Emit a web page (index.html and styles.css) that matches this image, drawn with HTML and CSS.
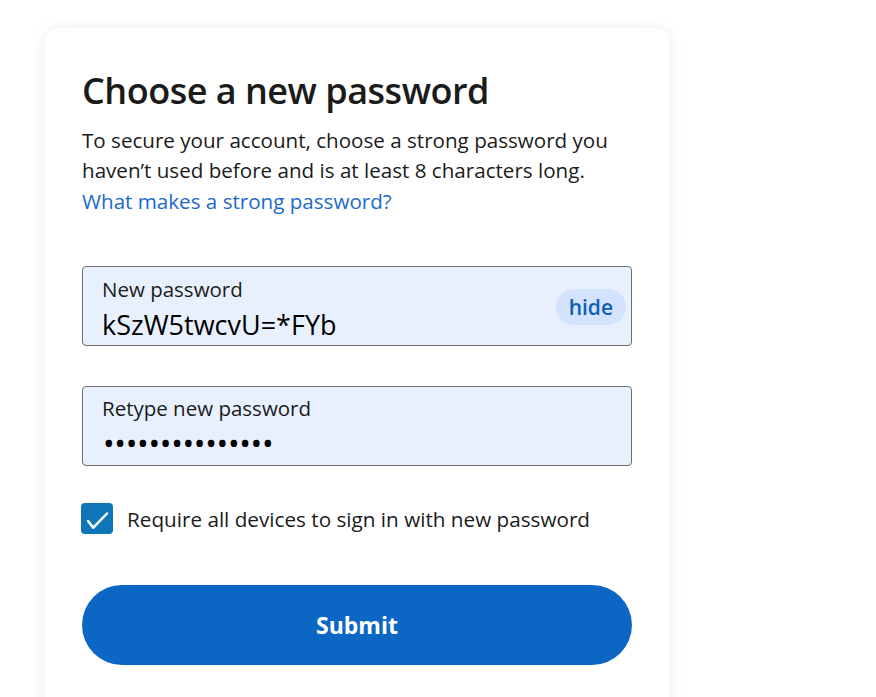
FILE: index.html
```html
<!DOCTYPE html>
<html lang="en">
<head>
<meta charset="utf-8">
<title>Choose a new password</title>
<link rel="stylesheet" href="styles.css">
</head>
<body>
<main class="card">
  <h1 class="title">Choose a new password</h1>
  <p class="intro">To secure your account, choose a strong password you haven’t used before and is at least 8 characters long.<br><a class="link" href="#">What makes a strong password?</a></p>

  <div class="field">
    <div class="field-text">
      <span class="label">New password</span>
      <span class="value">kSzW5twcvU=*FYb</span>
    </div>
    <span class="hide">hide</span>
  </div>

  <div class="field field-second">
    <div class="field-text">
      <span class="label">Retype new password</span>
      <span class="value dots">•••••••••••••••</span>
    </div>
  </div>

  <label class="check-row">
    <span class="checkbox">
      <svg width="32" height="31" viewBox="0 0 32 31"><path d="M7 18 L12.3 24.7 L26 10.5" fill="none" stroke="#fff" stroke-width="2.5" stroke-linecap="round" stroke-linejoin="round"/></svg>
    </span>
    <span class="check-label">Require all devices to sign in with new password</span>
  </label>

  <button class="submit" type="button">Submit</button>
</main>
</body>
</html>
```

FILE: styles.css
```css
* { box-sizing: border-box; }
html, body { margin: 0; padding: 0; background: #fff; }
body {
  font-family: "Open Sans", "Noto Sans", sans-serif;
  color: #1b1b1b;
  padding: 28px 0 0 45px;
}
.card {
  width: 624px;
  height: 700px;
  background: #fff;
  border-radius: 14px;
  box-shadow: 0 2px 18px rgba(0,0,0,0.08);
  padding: 41px 37px 0 37px;
}
.title {
  margin: 0;
  font-size: 36px;
  font-weight: 600;
  line-height: 44px;
  letter-spacing: -0.5px;
  color: #1b1b1b;
}
.intro {
  margin: 11.5px 0 0 0;
  font-size: 20.6px;
  line-height: 30.5px;
}
.link { color: #1a6bc8; text-decoration: none; }
.field {
  margin-top: 50px;
  height: 80px;
  border: 1px solid #6e6e6e;
  border-radius: 4px;
  background: #e8f0fe;
  display: flex;
  align-items: flex-start;
  padding: 8.5px 5px 0 19px;
}
.field-second { margin-top: 39.5px; }
.field-text { flex: 1; display: flex; flex-direction: column; }
.label { font-size: 20.5px; line-height: 26px; }
.value { font-size: 27px; line-height: 34px; margin-top: 6px; color: #000; }
.dots { font-size: 31px; letter-spacing: -0.3px; line-height: 30px; margin-top: 7px; margin-left: 1px; }
.hide {
  background: #d3e3fd;
  color: #0f5fb5;
  font-size: 21px;
  font-weight: 600;
  line-height: 36px;
  padding: 0 13px;
  border-radius: 18px;
  margin-top: 13.5px;
}
.check-row {
  margin-top: 37.5px;
  display: flex;
  align-items: center;
  gap: 14px;
}
.checkbox {
  width: 32px; height: 31px;
  border-radius: 4px;
  background: #0f75b9;
  display: flex;
  margin-left: -1px;
}
.check-label { font-size: 20.7px; }
.submit {
  margin-top: 51px;
  width: 550px;
  height: 80px;
  border: 0;
  border-radius: 40px;
  background: #0c67c4;
  color: #fff;
  font-family: "Open Sans", "Noto Sans", sans-serif;
  font-size: 23px;
  font-weight: 700;
  display: block;
}
```
